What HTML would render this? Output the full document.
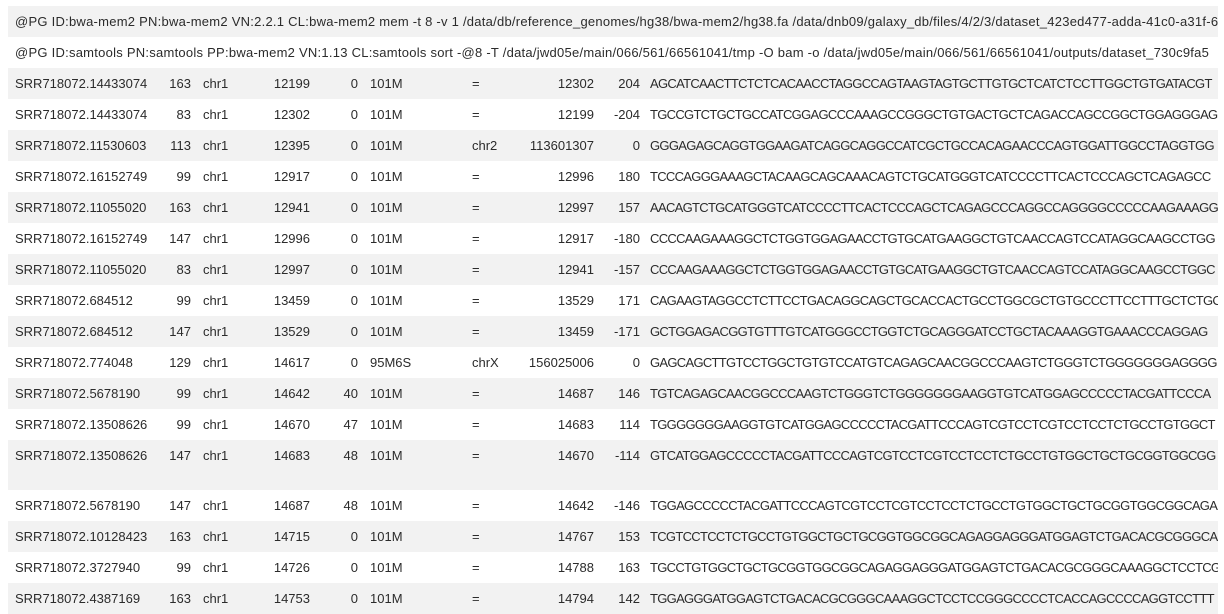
<!DOCTYPE html>
<html><head><meta charset="utf-8"><style>
body{margin:0;background:#fff;font-family:"Liberation Sans",sans-serif;font-size:13px;color:#2b2b2b;}
.wrap{position:absolute;left:8px;top:6px;width:1210px;overflow:hidden;}
table{border-collapse:collapse;table-layout:fixed;width:1800px;}
td{height:31px;padding:0;white-space:nowrap;overflow:hidden;vertical-align:middle;}
tr:nth-child(odd){background:#f2f2f2;}
.h{padding-left:7px;}
.hh{padding-left:7px;letter-spacing:0.25px;}
.l{padding-left:6px;text-align:left}
.r{padding-right:6px;text-align:right}
.s{padding-left:4px;letter-spacing:-0.7px}
.tall td{height:50px;vertical-align:top;padding-top:8px;box-sizing:border-box}
</style></head><body><div class="wrap"><table>
<colgroup><col style="width:152px"><col style="width:37px"><col style="width:43px"><col style="width:76px"><col style="width:48px"><col style="width:102px"><col style="width:50px"><col style="width:84px"><col style="width:46px"><col style="width:1162px"></colgroup>
<tr><td colspan="10" class="hh">@PG ID:bwa-mem2 PN:bwa-mem2 VN:2.2.1 CL:bwa-mem2 mem -t 8 -v 1 /data/db/reference_genomes/hg38/bwa-mem2/hg38.fa /data/dnb09/galaxy_db/files/4/2/3/dataset_423ed477-adda-41c0-a31f-6</td></tr>
<tr><td colspan="10" class="hh">@PG ID:samtools PN:samtools PP:bwa-mem2 VN:1.13 CL:samtools sort -@8 -T /data/jwd05e/main/066/561/66561041/tmp -O bam -o /data/jwd05e/main/066/561/66561041/outputs/dataset_730c9fa5</td></tr>
<tr><td class="h">SRR718072.14433074</td><td class="r">163</td><td class="l">chr1</td><td class="r">12199</td><td class="r">0</td><td class="l">101M</td><td class="l">=</td><td class="r">12302</td><td class="r">204</td><td class="s">AGCATCAACTTCTCTCACAACCTAGGCCAGTAAGTAGTGCTTGTGCTCATCTCCTTGGCTGTGATACGT</td></tr>
<tr><td class="h">SRR718072.14433074</td><td class="r">83</td><td class="l">chr1</td><td class="r">12302</td><td class="r">0</td><td class="l">101M</td><td class="l">=</td><td class="r">12199</td><td class="r">-204</td><td class="s">TGCCGTCTGCTGCCATCGGAGCCCAAAGCCGGGCTGTGACTGCTCAGACCAGCCGGCTGGAGGGAG</td></tr>
<tr><td class="h">SRR718072.11530603</td><td class="r">113</td><td class="l">chr1</td><td class="r">12395</td><td class="r">0</td><td class="l">101M</td><td class="l">chr2</td><td class="r">113601307</td><td class="r">0</td><td class="s">GGGAGAGCAGGTGGAAGATCAGGCAGGCCATCGCTGCCACAGAACCCAGTGGATTGGCCTAGGTGG</td></tr>
<tr><td class="h">SRR718072.16152749</td><td class="r">99</td><td class="l">chr1</td><td class="r">12917</td><td class="r">0</td><td class="l">101M</td><td class="l">=</td><td class="r">12996</td><td class="r">180</td><td class="s">TCCCAGGGAAAGCTACAAGCAGCAAACAGTCTGCATGGGTCATCCCCTTCACTCCCAGCTCAGAGCC</td></tr>
<tr><td class="h">SRR718072.11055020</td><td class="r">163</td><td class="l">chr1</td><td class="r">12941</td><td class="r">0</td><td class="l">101M</td><td class="l">=</td><td class="r">12997</td><td class="r">157</td><td class="s">AACAGTCTGCATGGGTCATCCCCTTCACTCCCAGCTCAGAGCCCAGGCCAGGGGCCCCCAAGAAAGG</td></tr>
<tr><td class="h">SRR718072.16152749</td><td class="r">147</td><td class="l">chr1</td><td class="r">12996</td><td class="r">0</td><td class="l">101M</td><td class="l">=</td><td class="r">12917</td><td class="r">-180</td><td class="s">CCCCAAGAAAGGCTCTGGTGGAGAACCTGTGCATGAAGGCTGTCAACCAGTCCATAGGCAAGCCTGG</td></tr>
<tr><td class="h">SRR718072.11055020</td><td class="r">83</td><td class="l">chr1</td><td class="r">12997</td><td class="r">0</td><td class="l">101M</td><td class="l">=</td><td class="r">12941</td><td class="r">-157</td><td class="s">CCCAAGAAAGGCTCTGGTGGAGAACCTGTGCATGAAGGCTGTCAACCAGTCCATAGGCAAGCCTGGC</td></tr>
<tr><td class="h">SRR718072.684512</td><td class="r">99</td><td class="l">chr1</td><td class="r">13459</td><td class="r">0</td><td class="l">101M</td><td class="l">=</td><td class="r">13529</td><td class="r">171</td><td class="s">CAGAAGTAGGCCTCTTCCTGACAGGCAGCTGCACCACTGCCTGGCGCTGTGCCCTTCCTTTGCTCTGC</td></tr>
<tr><td class="h">SRR718072.684512</td><td class="r">147</td><td class="l">chr1</td><td class="r">13529</td><td class="r">0</td><td class="l">101M</td><td class="l">=</td><td class="r">13459</td><td class="r">-171</td><td class="s">GCTGGAGACGGTGTTTGTCATGGGCCTGGTCTGCAGGGATCCTGCTACAAAGGTGAAACCCAGGAG</td></tr>
<tr><td class="h">SRR718072.774048</td><td class="r">129</td><td class="l">chr1</td><td class="r">14617</td><td class="r">0</td><td class="l">95M6S</td><td class="l">chrX</td><td class="r">156025006</td><td class="r">0</td><td class="s">GAGCAGCTTGTCCTGGCTGTGTCCATGTCAGAGCAACGGCCCAAGTCTGGGTCTGGGGGGGAGGGG</td></tr>
<tr><td class="h">SRR718072.5678190</td><td class="r">99</td><td class="l">chr1</td><td class="r">14642</td><td class="r">40</td><td class="l">101M</td><td class="l">=</td><td class="r">14687</td><td class="r">146</td><td class="s">TGTCAGAGCAACGGCCCAAGTCTGGGTCTGGGGGGGAAGGTGTCATGGAGCCCCCTACGATTCCCA</td></tr>
<tr><td class="h">SRR718072.13508626</td><td class="r">99</td><td class="l">chr1</td><td class="r">14670</td><td class="r">47</td><td class="l">101M</td><td class="l">=</td><td class="r">14683</td><td class="r">114</td><td class="s">TGGGGGGGAAGGTGTCATGGAGCCCCCTACGATTCCCAGTCGTCCTCGTCCTCCTCTGCCTGTGGCT</td></tr>
<tr class="tall"><td class="h">SRR718072.13508626</td><td class="r">147</td><td class="l">chr1</td><td class="r">14683</td><td class="r">48</td><td class="l">101M</td><td class="l">=</td><td class="r">14670</td><td class="r">-114</td><td class="s">GTCATGGAGCCCCCTACGATTCCCAGTCGTCCTCGTCCTCCTCTGCCTGTGGCTGCTGCGGTGGCGG</td></tr>
<tr><td class="h">SRR718072.5678190</td><td class="r">147</td><td class="l">chr1</td><td class="r">14687</td><td class="r">48</td><td class="l">101M</td><td class="l">=</td><td class="r">14642</td><td class="r">-146</td><td class="s">TGGAGCCCCCTACGATTCCCAGTCGTCCTCGTCCTCCTCTGCCTGTGGCTGCTGCGGTGGCGGCAGA</td></tr>
<tr><td class="h">SRR718072.10128423</td><td class="r">163</td><td class="l">chr1</td><td class="r">14715</td><td class="r">0</td><td class="l">101M</td><td class="l">=</td><td class="r">14767</td><td class="r">153</td><td class="s">TCGTCCTCCTCTGCCTGTGGCTGCTGCGGTGGCGGCAGAGGAGGGATGGAGTCTGACACGCGGGCA</td></tr>
<tr><td class="h">SRR718072.3727940</td><td class="r">99</td><td class="l">chr1</td><td class="r">14726</td><td class="r">0</td><td class="l">101M</td><td class="l">=</td><td class="r">14788</td><td class="r">163</td><td class="s">TGCCTGTGGCTGCTGCGGTGGCGGCAGAGGAGGGATGGAGTCTGACACGCGGGCAAAGGCTCCTCG</td></tr>
<tr><td class="h">SRR718072.4387169</td><td class="r">163</td><td class="l">chr1</td><td class="r">14753</td><td class="r">0</td><td class="l">101M</td><td class="l">=</td><td class="r">14794</td><td class="r">142</td><td class="s">TGGAGGGATGGAGTCTGACACGCGGGCAAAGGCTCCTCCGGGCCCCTCACCAGCCCCAGGTCCTTT</td></tr>
</table></div></body></html>
